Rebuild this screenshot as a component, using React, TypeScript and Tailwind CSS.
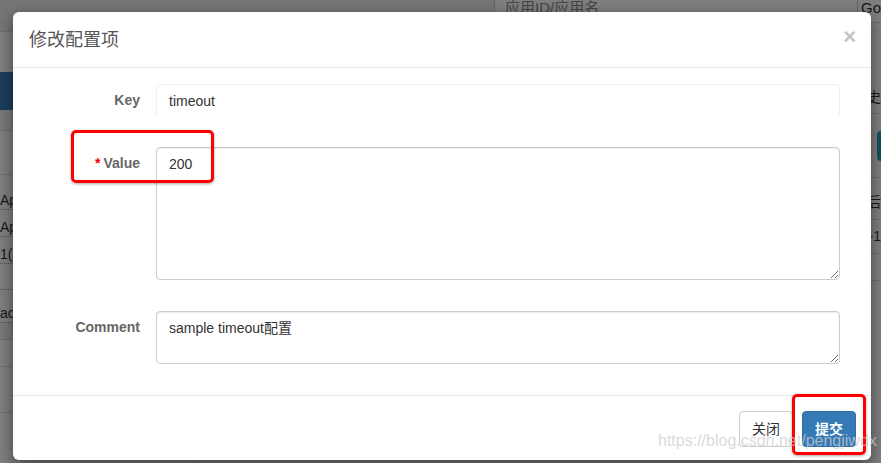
import React from 'react'

const font = "font-['Liberation_Sans','Noto_Sans_CJK_SC',sans-serif]"

// Page that sits behind the dimmed backdrop — only slivers of it are visible.
function BackgroundPage() {
  return (
    <div className="absolute inset-0 flex flex-col bg-white">
      <div className="flex h-[16px] shrink-0">
        <div className="w-[494px] bg-[#ececec]" />
        <div className="flex w-[363px] items-center border-l border-[#ccc] bg-white pl-[10px] text-[15px] leading-[16px] text-[#888]">
          应用ID/应用名
        </div>
        <div className="flex flex-1 items-center border-l border-[#ccc] bg-white pl-[3px] text-[15px] leading-[16px] text-[#333]">
          Go
        </div>
      </div>
      <div className="flex flex-1">
        <div className="flex w-[200px] flex-col border-r border-[#ddd] text-[14px] leading-[18px] text-[#333]">
          <div className="h-[16px] border-b border-[#ddd] bg-[#ececec]" />
          <div className="h-[40px]" />
          <div className="h-[38px] bg-[#3b7cbc]" />
          <div className="h-[21px] border-b border-[#ddd] bg-[#f5f5f5]" />
          <div className="h-[44px] border-b border-[#ddd]" />
          <div className="flex h-[35px] items-end border-b border-dotted border-[#999]">AppId</div>
          <div className="flex h-[27px] items-end border-b border-dotted border-[#999]">AppName</div>
          <div className="flex h-[27px] items-end border-b border-dotted border-[#999]">1(default)</div>
          <div className="h-[26px] border-b border-dotted border-[#999]" />
          <div className="flex h-[33px] items-end border-b border-dotted border-[#999]">accessKey</div>
          <div className="h-[17px] border-b border-[#ddd] bg-[#f5f5f5]" />
          <div className="h-[27px] border-b border-[#ddd]" />
          <div className="h-[46px] border-b border-[#ddd]" />
        </div>
        <div className="flex-1" />
        <div className="flex w-[60px] flex-col text-[14px] text-[#333]">
          <div className="h-[7px] border-b border-[#ddd]" />
          <div className="h-[58px]" />
          <div className="flex h-[33px] items-center justify-end border-b border-[#ddd]">历史</div>
          <div className="flex h-[17px]" />
          <div className="ml-[56px] h-[30px] rounded-l-[4px] bg-[#2aa3b8]" />
          <div className="h-[17px] border-b border-[#ddd]" />
          <div className="flex h-[42px] items-end justify-end border-b border-[#ddd] pb-[6px]">最后</div>
          <div className="flex h-[34px] items-center justify-end border-b border-[#ddd]">2019-1</div>
          <div className="h-[27px] border-b border-[#ddd]" />
        </div>
      </div>
    </div>
  )
}

function FormRow({
  label,
  required,
  children,
}: {
  label: string
  required?: boolean
  children: React.ReactNode
}) {
  return (
    <div className="flex">
      <div className="w-[127px] pt-[6px] text-right text-[14px] font-bold leading-[20px] text-[#666]">
        {required && <span className="mr-[3px] text-[#e00]">*</span>}
        {label}
      </div>
      <div className="ml-[16px] w-[684px]">{children}</div>
    </div>
  )
}

export default function App() {
  return (
    <div className={`relative h-[463px] w-[881px] overflow-hidden ${font}`}>
      <BackgroundPage />
      <div className="absolute inset-0 bg-black/50" />

      {/* modal */}
      <div className="absolute left-[13px] top-[12px] flex h-[448px] w-[858px] flex-col rounded-[6px] bg-white shadow-[0_5px_15px_rgba(0,0,0,0.5)]">
        <div className="flex h-[56px] shrink-0 items-center justify-between border-b border-[#e5e5e5] pl-[16px] pr-[15px]">
          <h4 className="text-[18px] leading-[20px] text-[#555]">修改配置项</h4>
          <span className="-mt-[6px] text-[22px] font-bold leading-[20px] text-[#c4c4c4]">×</span>
        </div>

        <div className="flex shrink-0 flex-col gap-[31px] pb-[31px] pt-[16px]">
          <FormRow label="Key">
            <div className="h-[32px] rounded-[4px] border border-b-0 border-[#eeeeee] px-[12px] text-[14px] leading-[32px] text-[#333]">
              timeout
            </div>
          </FormRow>
          <FormRow label="Value" required>
            <textarea
              readOnly
              defaultValue="200"
              className="block h-[133px] w-full rounded-[4px] border border-[#ccc] px-[12px] py-[6px] text-[14px] leading-[20px] text-[#333] shadow-[inset_0_1px_1px_rgba(0,0,0,0.075)] outline-none"
            />
          </FormRow>
          <FormRow label="Comment">
            <textarea
              readOnly
              defaultValue="sample timeout配置"
              className="block h-[53px] w-full rounded-[4px] border border-[#ccc] px-[12px] py-[6px] text-[14px] leading-[20px] text-[#333] shadow-[inset_0_1px_1px_rgba(0,0,0,0.075)] outline-none"
            />
          </FormRow>
        </div>

        <div className="flex flex-1 items-start justify-end gap-[9px] border-t border-[#e5e5e5] pr-[15px] pt-[15px]">
          <button className="h-[36px] w-[54px] rounded-[4px] border border-[#ccc] bg-white text-[14px] text-[#333]">
            关闭
          </button>
          <button className="h-[36px] w-[54px] rounded-[4px] border border-[#2e6da4] bg-[#337ab7] text-[14px] font-bold text-white">
            提交
          </button>
        </div>
      </div>

      {/* annotations */}
      <div className="absolute left-[71px] top-[130px] h-[53px] w-[143px] rounded-[5px] border-[3px] border-[#f00] shadow-[0_1px_3px_rgba(0,0,0,0.35)]" />
      <div className="absolute left-[792px] top-[394px] h-[61px] w-[74px] rounded-[5px] border-[3px] border-[#f00] shadow-[0_1px_3px_rgba(0,0,0,0.35)]" />
      <div className="absolute left-[658px] top-[432px] whitespace-nowrap text-[16px] leading-[18px] text-[rgba(205,205,205,0.75)]">
        https://blog.csdn.net/pengjiwdx
      </div>
    </div>
  )
}
